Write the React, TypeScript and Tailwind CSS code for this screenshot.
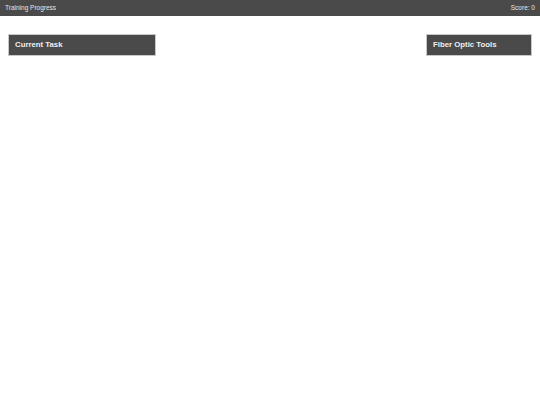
export default function App() {
  return (
    <div className="w-[540px] h-[405px] bg-white" style={{ fontFamily: '"Liberation Sans", Arial, sans-serif' }}>
      <div className="h-[16px] bg-[#4a4a4a] flex items-center justify-between px-[5px] text-[6.5px] text-[#e6e6e6]">
        <span>Training Progress</span>
        <span>Score: 0</span>
      </div>
      <div className="flex justify-between px-[8px] mt-[18px]">
        <div className="w-[148px] h-[22px] bg-[#4a4a4a] border border-[#c8c8c8] flex items-center pl-[6px] text-[7.8px] font-bold text-[#f0f0f0]">
          Current Task
        </div>
        <div className="w-[106px] h-[22px] bg-[#4a4a4a] border border-[#c8c8c8] flex items-center pl-[6px] text-[7.8px] font-bold text-[#f0f0f0]">
          Fiber Optic Tools
        </div>
      </div>
    </div>
  );
}
